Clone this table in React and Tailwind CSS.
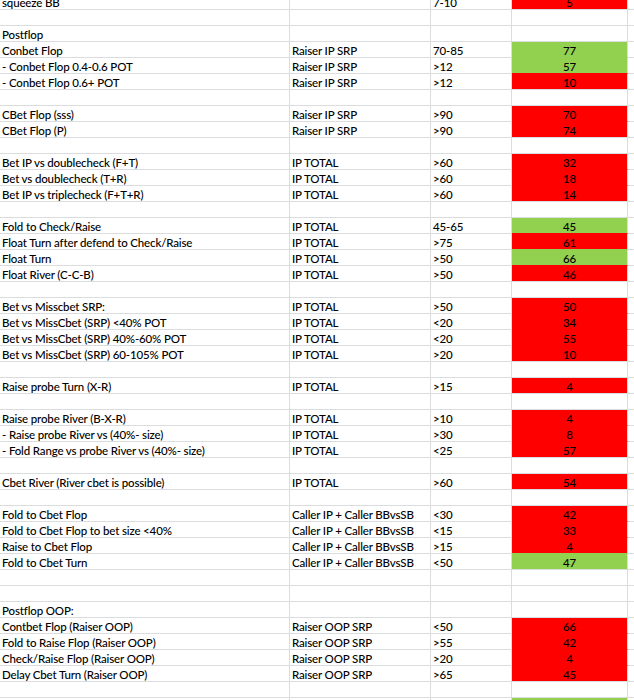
const R = "#ff0000";
const G = "#92d050";

const rows = [
  ["squeeze BB", "", "7-10", "5", R],
  [],
  ["Postflop"],
  ["Conbet Flop", "Raiser IP SRP", "70-85", "77", G],
  ["- Conbet Flop 0.4-0.6 POT", "Raiser IP SRP", ">12", "57", G],
  ["- Conbet Flop 0.6+ POT", "Raiser IP SRP", ">12", "10", R],
  [],
  ["CBet Flop (sss)", "Raiser IP SRP", ">90", "70", R],
  ["CBet Flop (P)", "Raiser IP SRP", ">90", "74", R],
  [],
  ["Bet IP vs doublecheck (F+T)", "IP TOTAL", ">60", "32", R],
  ["Bet vs doublecheck (T+R)", "IP TOTAL", ">60", "18", R],
  ["Bet IP vs triplecheck (F+T+R)", "IP TOTAL", ">60", "14", R],
  [],
  ["Fold to Check/Raise", "IP TOTAL", "45-65", "45", G],
  ["Float Turn after defend to Check/Raise", "IP TOTAL", ">75", "61", R],
  ["Float Turn", "IP TOTAL", ">50", "66", G],
  ["Float River (C-C-B)", "IP TOTAL", ">50", "46", R],
  [],
  ["Bet vs Misscbet SRP:", "IP TOTAL", ">50", "50", R],
  ["Bet vs MissCbet (SRP) <40% POT", "IP TOTAL", "<20", "34", R],
  ["Bet vs MissCbet (SRP) 40%-60% POT", "IP TOTAL", "<20", "55", R],
  ["Bet vs MissCbet (SRP) 60-105% POT", "IP TOTAL", ">20", "10", R],
  [],
  ["Raise probe Turn (X-R)", "IP TOTAL", ">15", "4", R],
  [],
  ["Raise probe River (B-X-R)", "IP TOTAL", ">10", "4", R],
  ["- Raise probe River vs (40%- size)", "IP TOTAL", ">30", "8", R],
  ["- Fold Range vs probe River vs (40%- size)", "IP TOTAL", "<25", "57", R],
  [],
  ["Cbet River (River cbet is possible)", "IP TOTAL", ">60", "54", R],
  [],
  ["Fold to Cbet Flop", "Caller IP + Caller BBvsSB", "<30", "42", R],
  ["Fold to Cbet Flop to bet size <40%", "Caller IP + Caller BBvsSB", "<15", "33", R],
  ["Raise to Cbet Flop", "Caller IP + Caller BBvsSB", ">15", "4", R],
  ["Fold to Cbet Turn", "Caller IP + Caller BBvsSB", "<50", "47", G],
  [],
  [],
  ["Postflop OOP:"],
  ["Contbet Flop (Raiser OOP)", "Raiser OOP SRP", "<50", "66", R],
  ["Fold to Raise Flop (Raiser OOP)", "Raiser OOP SRP", ">55", "42", R],
  ["Check/Raise Flop (Raiser OOP)", "Raiser OOP SRP", ">20", "4", R],
  ["Delay Cbet Turn (Raiser OOP)", "Raiser OOP SRP", ">65", "45", R],
  [],
  ["", "", "", "", G],
];

const cell = "h-4 border-r border-b border-[#dadcdd] px-[2px] pt-[2px] leading-[14px] whitespace-nowrap overflow-hidden";

export default function App() {
  return (
    <div
      className="w-[634px] h-[700px] overflow-hidden bg-white text-black font-medium text-[11.5px] tracking-[-0.15px]"
      style={{ fontFamily: 'Lato, "Liberation Sans", sans-serif' }}
    >
      <div className="-mt-[6px] grid grid-cols-[290px_141px_81px_116px_1fr]">
        {rows.map((r, i) => {
          const [a = "", b = "", c = "", d = "", fill] = r;
          const nextFill = rows[i + 1] && rows[i + 1][4];
          return [
            <div key={i + "a"} className={cell}>{a}</div>,
            <div key={i + "b"} className={cell}>{b}</div>,
            <div key={i + "c"} className={cell}>{c}</div>,
            <div
              key={i + "d"}
              className={cell + " text-center"}
              style={fill ? { backgroundColor: fill, borderBottomColor: nextFill || "#dadcdd" } : undefined}
            >
              {d}
            </div>,
            <div key={i + "e"} className="h-4 border-b border-[#dadcdd]" />,
          ];
        })}
      </div>
    </div>
  );
}
